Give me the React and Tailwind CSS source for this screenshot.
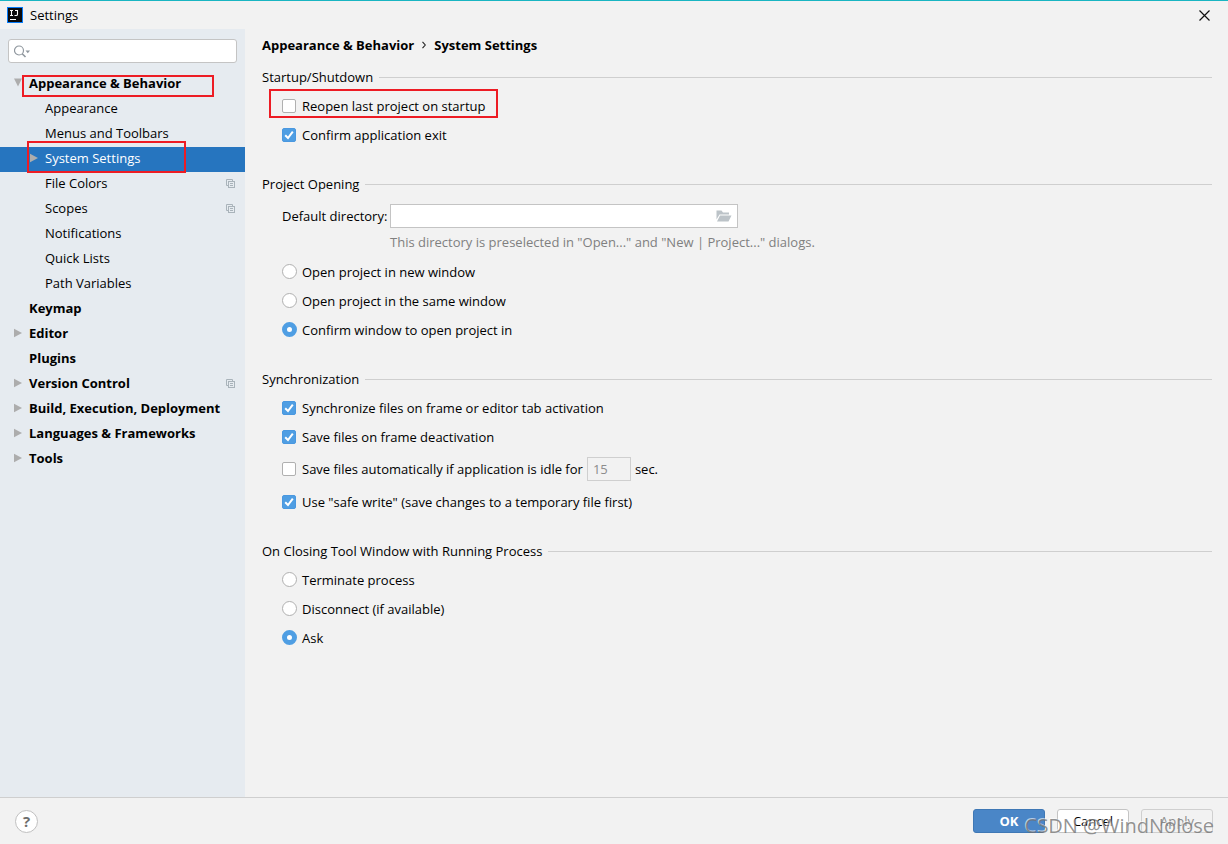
import React, { useState } from 'react';

const TREE = [
  { label: 'Appearance & Behavior', level: 0, arrow: 'down', marked: true },
  { label: 'Appearance', level: 1 },
  { label: 'Menus and Toolbars', level: 1 },
  { label: 'System Settings', level: 1, arrow: 'right', marked: true },
  { label: 'File Colors', level: 1, perProject: true },
  { label: 'Scopes', level: 1, perProject: true },
  { label: 'Notifications', level: 1 },
  { label: 'Quick Lists', level: 1 },
  { label: 'Path Variables', level: 1 },
  { label: 'Keymap', level: 0 },
  { label: 'Editor', level: 0, arrow: 'right' },
  { label: 'Plugins', level: 0 },
  { label: 'Version Control', level: 0, arrow: 'right', perProject: true },
  { label: 'Build, Execution, Deployment', level: 0, arrow: 'right' },
  { label: 'Languages & Frameworks', level: 0, arrow: 'right' },
  { label: 'Tools', level: 0, arrow: 'right' },
];

function Arrow({ dir }) {
  return (
    <svg width="8" height="10" viewBox="0 0 8 10" fill="#adadad">
      {dir === 'right' && <path d="M0 0.7L8 5L0 9.3z" />}
      {dir === 'down' && <path d="M0 0.5H8L4 8.5z" />}
    </svg>
  );
}

function CopyIcon() {
  return (
    <svg width="9" height="9" viewBox="0 0 9 9" fill="none" stroke="#a9b3ba" strokeWidth="1">
      <path d="M2.5 6.5H0.5V0.5H6.5V2.5" />
      <rect x="2.5" y="2.5" width="6" height="6" />
      <path d="M4 4.5h3M4 6.5h3" />
    </svg>
  );
}

function TreeItem({ item, selected, onSelect }) {
  const { label, level, arrow, perProject, marked } = item;
  return (
    <li className="relative">
      <button
        onClick={onSelect}
        className={`flex h-[25px] w-full items-center pr-[10px] pb-[3px] text-left ${level === 0 ? 'pl-[14px] font-bold' : 'pl-[30px]'} ${selected ? 'bg-[#2675bf] text-white' : ''}`}
      >
        <span className="w-[15px]"><Arrow dir={arrow} /></span>
        <span className="flex-1 whitespace-nowrap">{label}</span>
        {perProject && <CopyIcon />}
      </button>
      {marked && level === 0 && <span className="pointer-events-none absolute top-[3px] left-[22px] h-[22px] w-[192px] border-2 border-[#ed1c24]" />}
      {marked && level === 1 && <span className="pointer-events-none absolute -top-[6px] left-[27px] z-10 h-8 w-[159px] border-2 border-[#ed1c24]" />}
    </li>
  );
}

function Section({ title, children }) {
  return (
    <section className="mb-[25px]">
      <div className="flex h-5 items-center gap-[6px]">
        <h2>{title}</h2>
        <span className="h-px flex-1 bg-[#cfcfcf]" />
      </div>
      <div className="mt-1 pl-5">{children}</div>
    </section>
  );
}

function Checkbox({ label, checked }) {
  return (
    <label className="flex h-[29px] w-fit items-center gap-[6px]">
      <span className="grid">
        <input type="checkbox" defaultChecked={checked} className="peer col-start-1 row-start-1 size-[14px] appearance-none rounded-[2px] border border-[#b0b0b0] bg-white checked:border-[#4a98e0] checked:bg-[#4f9ee3]" />
        <svg className="pointer-events-none invisible col-start-1 row-start-1 peer-checked:visible" width="14" height="14" viewBox="0 0 14 14" fill="none" stroke="#fff" strokeWidth="2">
          <path d="M3.2 7.2L6 10L10.8 3.6" />
        </svg>
      </span>
      {label}
    </label>
  );
}

function Radio({ name, label, checked }) {
  return (
    <label className="flex h-[29px] w-fit items-center gap-[5px]">
      <input type="radio" name={name} defaultChecked={checked} className="size-[15px] appearance-none rounded-full border border-[#b0b0b0] bg-white checked:border-[5px] checked:border-[#4f9ee3]" />
      {label}
    </label>
  );
}

export default function App() {
  const [selected, setSelected] = useState('System Settings');

  return (
    <div className="relative flex min-h-screen flex-col border-t border-[#19b5c2] bg-[#f2f2f2] font-['Open_Sans','Noto_Sans',sans-serif] text-[13px] leading-5 text-black">
      {/* Title bar */}
      <header className="flex h-7 items-center pr-[18px] pl-[7px]">
        <svg width="16" height="16" viewBox="0 0 16 16" fill="none">
          <rect width="16" height="16" fill="#087cfa" />
          <rect x="1" y="1" width="14" height="14" fill="#0b0b0d" />
          <path d="M3 3.5h3M4.5 3.5v5M3 8.5h3M8 3.5h2.5v3.7q0 1.3-1.3 1.3H7.5M3 12.5h6" stroke="#fff" strokeWidth="1.1" />
        </svg>
        <h1 className="ml-[7px] flex-1">Settings</h1>
        <button aria-label="Close">
          <svg width="11" height="11" viewBox="0 0 11 11" stroke="#111" strokeWidth="1.2">
            <path d="M0.5 0.5l10 10M10.5 0.5l-10 10" />
          </svg>
        </button>
      </header>

      <div className="flex flex-1">
        {/* Sidebar */}
        <aside className="w-[245px] shrink-0 bg-[#e6ebf0] pt-[10px]">
          <div className="mx-2 flex h-6 items-center rounded-[3px] border border-[#c4c4c4] bg-white pl-[5px]">
            <svg width="17" height="13" viewBox="0 0 17 13" fill="none" stroke="#8f979e" strokeWidth="1.2">
              <circle cx="5" cy="5.5" r="4.5" />
              <path d="M8.2 8.7l3.3 3.3" strokeWidth="1.6" />
              <path d="M11.5 5.5h4.5l-2.2 2.8z" fill="#8f979e" stroke="none" />
            </svg>
            <input type="text" aria-label="Search settings" className="min-w-0 flex-1 px-1 outline-none" />
          </div>
          <ul className="mt-[9px]">
            {TREE.map((item) => (
              <TreeItem key={item.label} item={item} selected={selected === item.label} onSelect={() => setSelected(item.label)} />
            ))}
          </ul>
        </aside>

        {/* Settings page */}
        <main className="min-w-0 flex-1 pt-[6px] pr-4 pl-[17px]">
          <div className="mb-3 flex h-5 items-center font-bold">
            <span>Appearance &amp; Behavior</span>
            <svg className="mx-2" width="4" height="8" viewBox="0 0 4 8" fill="none" stroke="#222" strokeWidth="1.1">
              <path d="M0.5 0.8L3.3 4L0.5 7.2" />
            </svg>
            <span>System Settings</span>
          </div>

          <Section title="Startup/Shutdown">
            <div className="relative">
              <Checkbox label="Reopen last project on startup" />
              <span className="pointer-events-none absolute -top-[2px] -left-[13px] h-[29px] w-[229px] border-2 border-[#ed1c24]" />
            </div>
            <Checkbox label="Confirm application exit" checked />
          </Section>

          <Section title="Project Opening">
            <div className="flex items-start pt-[6px]">
              <label htmlFor="directory" className="w-[108px] shrink-0 leading-6 whitespace-nowrap">Default directory:</label>
              <div>
                <div className="flex h-6 w-[348px] items-center border border-[#c4c4c4] bg-white pr-[5px]">
                  <input id="directory" type="text" className="min-w-0 flex-1 px-1 outline-none" />
                  <button aria-label="Browse">
                    <svg width="16" height="12" viewBox="0 0 16 12" fill="#bcc3c8">
                      <path d="M0.5 9.5V0.5H5.5L7 2.5H13V4.5H3.5z" />
                      <path d="M4 5.5H15.5L12.5 11.5H1z" />
                    </svg>
                  </button>
                </div>
                <p className="mt-1 mb-[5px] text-[#808080]">This directory is preselected in "Open..." and "New | Project..." dialogs.</p>
              </div>
            </div>
            <Radio name="open" label="Open project in new window" />
            <Radio name="open" label="Open project in the same window" />
            <Radio name="open" label="Confirm window to open project in" checked />
          </Section>

          <Section title="Synchronization">
            <Checkbox label="Synchronize files on frame or editor tab activation" checked />
            <Checkbox label="Save files on frame deactivation" checked />
            <div className="flex h-9 items-center gap-1">
              <Checkbox label="Save files automatically if application is idle for" />
              <input type="text" aria-label="Idle seconds" defaultValue="15" disabled className="h-6 w-11 border border-[#cfcfcf] px-[5px] text-[#8c8c8c]" />
              <span>sec.</span>
            </div>
            <Checkbox label={'Use "safe write" (save changes to a temporary file first)'} checked />
          </Section>

          <Section title="On Closing Tool Window with Running Process">
            <Radio name="closing" label="Terminate process" />
            <Radio name="closing" label="Disconnect (if available)" />
            <Radio name="closing" label="Ask" checked />
          </Section>
        </main>
      </div>

      {/* Footer */}
      <footer className="flex h-[47px] items-center gap-3 border-t border-[#cfcfcf] pr-[15px] pl-[15px]">
        <button className="mr-auto size-[23px] rounded-full border border-[#c0c0c0] bg-white text-[15px] leading-5 font-bold text-[#6e6e6e]">?</button>
        <button className="h-6 w-[72px] rounded-[3px] border border-[#3f78b5] bg-[#4a86c7] font-bold text-white">OK</button>
        <button className="h-6 w-[72px] rounded-[3px] border border-[#c4c4c4] bg-white">Cancel</button>
        <button disabled className="h-6 w-[72px] rounded-[3px] border border-[#cfcfcf] text-[#8c8c8c]">Apply</button>
      </footer>
      <span className="pointer-events-none absolute right-[14px] bottom-1 text-[20px] leading-7 text-[#707070]/75 [text-shadow:-1px_-1px_0_rgba(255,255,255,0.6)]">CSDN @WindNolose</span>
    </div>
  );
}
